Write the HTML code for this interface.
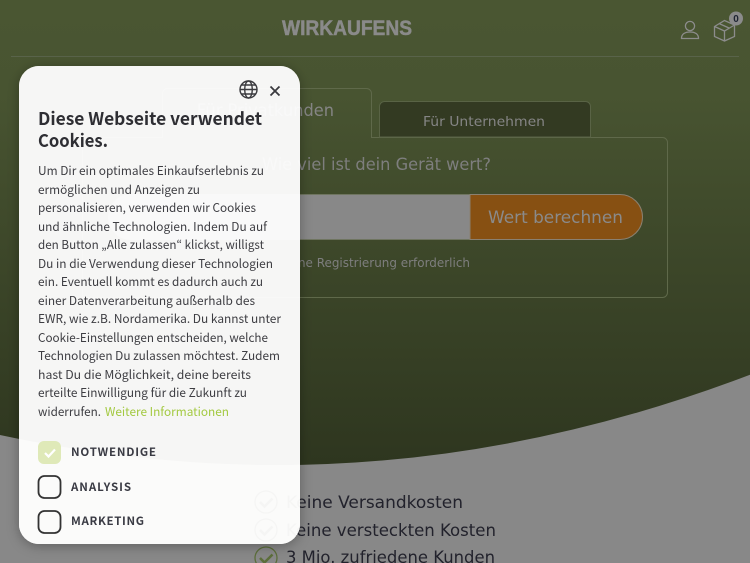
<!DOCTYPE html>
<html lang="de">
<head>
<meta charset="utf-8">
<title>WIRKAUFENS</title>
<style>
html,body{margin:0;padding:0;width:750px;height:563px;overflow:hidden;background:#888}
svg{display:block}
.p{font-family:"DejaVu Sans",sans-serif}
.o{font-family:"Noto Sans CJK JP","Liberation Sans",sans-serif;fill:#3d3d42;font-size:12px}
.l{font-family:"Noto Sans CJK JP","Liberation Sans",sans-serif;fill:#3a3b44;font-size:11.5px;font-weight:700}
</style>
</head>
<body>
<svg width="750" height="563" viewBox="0 0 750 563" xmlns="http://www.w3.org/2000/svg">
<defs>
<linearGradient id="g" x1="0" y1="0" x2="0" y2="1">
<stop offset="0" stop-color="#4a5632"/>
<stop offset=".2" stop-color="#485431"/>
<stop offset="1" stop-color="#2e361f"/>
</linearGradient>
<filter id="s" x="-10%" y="-10%" width="120%" height="120%"><feDropShadow dx="0" dy="2" stdDeviation="6" flood-color="#000" flood-opacity=".3"/></filter>
<clipPath id="c"><rect x="19" y="66" width="281" height="478" rx="20"/></clipPath>
</defs>
<rect width="750" height="563" fill="#888"/>
<path d="M0 0H750V374.75Q375 517.4 0 435Z" fill="url(#g)"/>
<line x1="11" y1="56.500" x2="739" y2="56.500" stroke="#59634a"/>
<text x="282" y="35" font-family="'Liberation Sans',sans-serif" font-weight="700" font-size="21" fill="#8a8a8a" stroke="#8a8a8a" stroke-width=".5" textLength="130" lengthAdjust="spacingAndGlyphs">WIRKAUFENS</text>
<g fill="none" stroke="#8c8c8c" stroke-width="1.300">
<circle cx="690" cy="26" r="4.600"/>
<path d="M681.500 38.500c0-4.500 3.500-6.500 8.500-6.500s8.500 2 8.500 6.500z"/>
<path d="M714.500 26.500l10-6 10 4.500v11.500l-10 4.500-10-4.500zM714.500 26.500l10 4.500 10-6M724.500 31v9.500M719 23.500l10 4.500"/>
</g>
<circle cx="736" cy="18.500" r="7" fill="#8b8b8b"/>
<text x="736" y="22" text-anchor="middle" font-family="'Liberation Sans',sans-serif" font-weight="700" font-size="10" fill="#1f2433">0</text>

<path d="M82.500 298.500V142.500a5 5 0 0 1 5-5H162.500V93.500a5 5 0 0 1 5-5H366.500a5 5 0 0 1 5 5V137.500H662.500a5 5 0 0 1 5 5V292.500a5 5 0 0 1-5 5H87.500a5 5 0 0 1-5-5Z" fill="none" stroke="#5f694a"/>
<path d="M379.500 137V106.500a5 5 0 0 1 5-5H585.500a5 5 0 0 1 5 5V137Z" fill="#333a22" stroke="#596345"/>
<text x="197" y="116" class="p" font-size="16.500" fill="#858585" textLength="137" lengthAdjust="spacingAndGlyphs">Für Privatkunden</text>
<text x="423" y="126" class="p" font-size="13.500" fill="#858585" textLength="122" lengthAdjust="spacingAndGlyphs">Für Unternehmen</text>
<text x="262" y="170" class="p" font-size="16.500" fill="#7e7e7e" textLength="229" lengthAdjust="spacingAndGlyphs">Wie viel ist dein Gerät wert?</text>
<path d="M470 194.500H131a22.500 22.500 0 0 0 0 45H470Z" fill="#888" stroke="#6f7560"/>
<path d="M470 194.500H620a22.500 22.500 0 0 1 0 45H470Z" fill="#875012" stroke="#8a8070"/>
<text x="488" y="223" class="p" font-size="16.500" fill="#8a8a8a" textLength="135" lengthAdjust="spacingAndGlyphs">Wert berechnen</text>
<text x="280" y="267" class="p" font-size="12.500" fill="#7e7e7e" textLength="190" lengthAdjust="spacingAndGlyphs">Keine Registrierung erforderlich</text>

<g fill="none" stroke="#5c6e3a" stroke-width="1.300">
<circle cx="266" cy="558" r="11"/>
<path stroke-width="2.500" d="M260 558l4.500 4.500 8-8"/>
</g>
<g class="p" font-size="17" fill="#22222c">
<text x="286" y="508" textLength="177" lengthAdjust="spacingAndGlyphs">Keine Versandkosten</text>
<text x="286" y="536" textLength="210" lengthAdjust="spacingAndGlyphs">Keine versteckten Kosten</text>
<text x="286" y="563" textLength="209" lengthAdjust="spacingAndGlyphs">3 Mio. zufriedene Kunden</text>
</g>

<rect x="19" y="66" width="281" height="478" rx="20" fill="#f6f6f5" filter="url(#s)"/>
<g clip-path="url(#c)">
<rect x="19" y="66" width="281" height="478" fill="#f6f6f5"/>
<path d="M0 435C100 456 190 465 275 465C400 465 600 430 750 374.750V563H0Z" fill="#fbfbfa"/>
<path d="M300 194H131a23 23 0 0 0 0 46H300Z" fill="#f9f9f9"/>
<path d="M82.500 300V142.500a5 5 0 0 1 5-5H162.500V93.500a5 5 0 0 1 5-5H300" fill="none" stroke="#f8f8f7"/>
<path d="M82.500 297.500H300" fill="none" stroke="#f8f8f7"/>
<text x="197" y="116" class="p" font-size="16.500" fill="#f9f9f9" textLength="137" lengthAdjust="spacingAndGlyphs">Für Privatkunden</text>
<text x="262" y="170" class="p" font-size="16.500" fill="#f9f9f9" textLength="229" lengthAdjust="spacingAndGlyphs">Wie viel ist dein Gerät wert?</text>
<g fill="none" stroke="#f5f5f4" stroke-width="1.300">
<circle cx="266" cy="502" r="11"/><circle cx="266" cy="530" r="11"/>
<path stroke-width="2.500" d="M260 502l4.500 4.500 8-8M260 530l4.500 4.500 8-8"/>
</g>
<g class="p" font-size="17" fill="#f5f5f4">
<text x="286" y="508" textLength="177" lengthAdjust="spacingAndGlyphs">Keine Versandkosten</text>
<text x="286" y="536" textLength="210" lengthAdjust="spacingAndGlyphs">Keine versteckten Kosten</text>
</g>
</g>
<g fill="none" stroke="#3a3a3e" stroke-width="1.400">
<circle cx="248.500" cy="89.500" r="8.500"/>
<ellipse cx="248.500" cy="89.500" rx="3.800" ry="8.500"/>
<path d="M240 89.500h17M241 85h15M241 94h15"/>
</g>
<path d="M270.500 86.500l9 9M279.500 86.500l-9 9" stroke="#3a3a3e" stroke-width="1.800" fill="none"/>
<g font-family="'Noto Sans CJK JP','Liberation Sans',sans-serif" font-size="17.500" font-weight="700" fill="#2e2e33">
<text x="38" y="125" textLength="224" lengthAdjust="spacingAndGlyphs">Diese Webseite verwendet</text>
<text x="38" y="147" textLength="70" lengthAdjust="spacingAndGlyphs">Cookies.</text>
</g>
<g class="o">
<text x="38" y="175" textLength="226" lengthAdjust="spacingAndGlyphs">Um Dir ein optimales Einkaufserlebnis zu</text>
<text x="38" y="194" textLength="162" lengthAdjust="spacingAndGlyphs">ermöglichen und Anzeigen zu</text>
<text x="38" y="212" textLength="218" lengthAdjust="spacingAndGlyphs">personalisieren, verwenden wir Cookies</text>
<text x="38" y="231" textLength="229" lengthAdjust="spacingAndGlyphs">und ähnliche Technologien. Indem Du auf</text>
<text x="38" y="249" textLength="226" lengthAdjust="spacingAndGlyphs">den Button „Alle zulassen“ klickst, willigst</text>
<text x="38" y="268" textLength="235" lengthAdjust="spacingAndGlyphs">Du in die Verwendung dieser Technologien</text>
<text x="38" y="286" textLength="225" lengthAdjust="spacingAndGlyphs">ein. Eventuell kommt es dadurch auch zu</text>
<text x="38" y="305" textLength="217" lengthAdjust="spacingAndGlyphs">einer Datenverarbeitung außerhalb des</text>
<text x="38" y="323" textLength="243" lengthAdjust="spacingAndGlyphs">EWR, wie z.B. Nordamerika. Du kannst unter</text>
<text x="38" y="342" textLength="230" lengthAdjust="spacingAndGlyphs">Cookie-Einstellungen entscheiden, welche</text>
<text x="38" y="360" textLength="242" lengthAdjust="spacingAndGlyphs">Technologien Du zulassen möchtest. Zudem</text>
<text x="38" y="379" textLength="213" lengthAdjust="spacingAndGlyphs">hast Du die Möglichkeit, deine bereits</text>
<text x="38" y="397" textLength="209" lengthAdjust="spacingAndGlyphs">erteilte Einwilligung für die Zukunft zu</text>
<text x="38" y="416" textLength="63" lengthAdjust="spacingAndGlyphs">widerrufen.</text>
<text x="105" y="416" textLength="124" lengthAdjust="spacingAndGlyphs" style="fill:#a3c940">Weitere Informationen</text>
</g>
<rect x="38" y="441" width="23" height="23" rx="6" fill="#dfe9b8"/>
<path d="M45 453l3.500 3.500 6.500-7" fill="none" stroke="#fff" stroke-width="2.200"/>
<rect x="38.500" y="476" width="22" height="22" rx="6" fill="none" stroke="#333" stroke-width="1.800"/>
<rect x="38.500" y="511" width="22" height="22" rx="6" fill="none" stroke="#333" stroke-width="1.800"/>
<g class="l">
<text x="71" y="456" textLength="85" lengthAdjust="spacing">NOTWENDIGE</text>
<text x="71" y="491" textLength="60" lengthAdjust="spacing">ANALYSIS</text>
<text x="71" y="525" textLength="73" lengthAdjust="spacing">MARKETING</text>
</g>
</svg>
</body>
</html>
